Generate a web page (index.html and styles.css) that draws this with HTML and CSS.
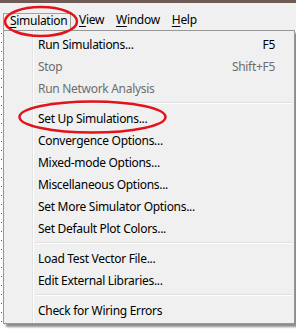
FILE: index.html
```html
<!DOCTYPE html>
<html lang="en">
<head>
    <meta charset="UTF-8">
    <title>Simulation menu</title>
    <link rel="stylesheet" href="styles.css">
</head>
<body>
    <div class="window">
        <div class="titlebar"></div>
        <div class="menubar">
            <span class="menu-head open"><u>S</u>imulation</span>
            <span class="menu-head"><u>V</u>iew</span>
            <span class="menu-head"><u>W</u>indow</span>
            <span class="menu-head"><u>H</u>elp</span>
        </div>

        <!-- the open Simulation dropdown -->
        <div class="dropdown">
            <div class="item"><span>Run Simulations...</span><span class="key">F5</span></div>
            <div class="item disabled"><span>Stop</span><span class="key">Shift+F5</span></div>
            <div class="item disabled"><span>Run Network Analysis</span></div>
            <div class="sep"></div>
            <div class="item"><span>Set Up Simulations...</span></div>
            <div class="item"><span>Convergence Options...</span></div>
            <div class="item"><span>Mixed-mode Options...</span></div>
            <div class="item"><span>Miscellaneous Options...</span></div>
            <div class="item"><span>Set More Simulator Options...</span></div>
            <div class="item"><span>Set Default Plot Colors...</span></div>
            <div class="sep"></div>
            <div class="item"><span>Load Test Vector File...</span></div>
            <div class="item"><span>Edit External Libraries...</span></div>
            <div class="sep"></div>
            <div class="item"><span>Check for Wiring Errors</span></div>
        </div>

        <!-- red marks drawn over the screenshot -->
        <svg class="marks" width="296" height="329" viewBox="0 0 296 329">
            <ellipse cx="41" cy="21.5" rx="36" ry="14.5" fill="none" stroke="#e3131b" stroke-width="2.5"/>
            <ellipse cx="92.5" cy="117" rx="73" ry="15.5" fill="none" stroke="#e3131b" stroke-width="2.5"/>
        </svg>
    </div>
</body>
</html>
```

FILE: styles.css
```css
body {
    margin: 0;
    padding: 0;
    background-color: #fff;
    font-family: "Noto Sans", "Open Sans", sans-serif;
    font-size: 12px;
    letter-spacing: -0.3px;
    color: #000;
}

.window {
    position: relative;
    width: 296px;
    height: 329px;
    overflow: hidden;
    background-color: #fff;
    background-image: radial-gradient(#555 0.6px, transparent 0.8px);
    background-size: 9px 9px;
    background-position: -3px 2px;
}

.titlebar {
    height: 3px;
    background-color: #6f5a56;
}

.menubar {
    display: flex;
    align-items: flex-end;
    height: 27px;
    background-color: #f0f0f0;
    padding-left: 3px;
    box-sizing: border-box;
}

.menu-head {
    padding: 0 6px;
    height: 17px;
    line-height: 14px;
}

.menu-head u {
    text-decoration-thickness: 1px;
    text-underline-offset: 2px;
}

.menu-head.open {
    box-sizing: border-box;
    width: 68px;
    margin-right: 2px;
    border: 1px solid #a0a0a0;
    border-bottom: none;
}

.dropdown {
    position: relative;
    margin-left: 3px;
    width: 286px;
    padding: 2px;
    border: 1px solid #979797;
    background-color: #f0f0f0;
    background-image: linear-gradient(to right, transparent 28px, #e2e3e3 28px, #e2e3e3 29px, #fff 29px, #fff 30px, transparent 30px);
    box-shadow: 3px 3px 2px rgba(0, 0, 0, 0.45);
}

.item {
    display: flex;
    justify-content: space-between;
    align-items: center;
    height: 22px;
    padding: 0 17px 0 32px;
}

.item.disabled {
    color: #6d6d6d;
}

.sep {
    height: 8px;
    margin-left: 30px;
    background-image: linear-gradient(#e0e0e0, #e0e0e0), linear-gradient(#fff, #fff);
    background-size: 100% 1px, 100% 1px;
    background-position: 0 3px, 0 4px;
    background-repeat: no-repeat;
}

.marks {
    position: absolute;
    top: 0;
    left: 0;
}
```
